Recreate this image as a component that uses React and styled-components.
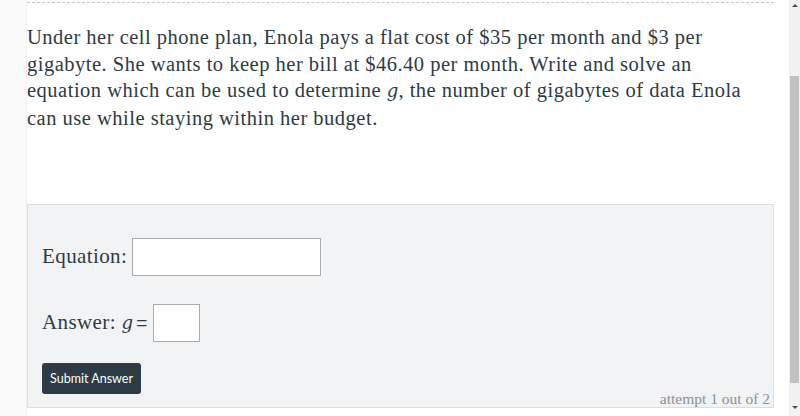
import React from "react";
import styled, { createGlobalStyle } from "styled-components";

const Global = createGlobalStyle`
  html, body { margin: 0; padding: 0; background: #fff; }
  body { width: 800px; height: 416px; overflow: hidden; }
  * { box-sizing: border-box; }
`;

const Page = styled.div`
  display: flex;
  width: 800px;
  height: 416px;
  background: #fff;
`;

const Gutter = styled.div`
  width: 27px;
  flex: none;
  background: #fafafa;
  border-right: 1px solid #f0f0f0;
`;

const Main = styled.div`
  width: 747px;
  flex: none;
  display: flex;
  flex-direction: column;
`;

const Divider = styled.div`
  margin-top: 2px;
  border-top: 1px dashed #c8c8c8;
`;

const Question = styled.p`
  margin: 21px 0 0 0;
  font-family: "Liberation Serif", "DejaVu Serif", serif;
  font-size: 20.5px;
  letter-spacing: 0.5px;
  line-height: 26.7px;
  color: #2d3b45;
  white-space: nowrap;
`;

const Var = styled.i`
  font-family: "DejaVu Serif", serif;
  font-size: 18px;
  letter-spacing: 0;
`;

const Panel = styled.div`
  margin-top: 72px;
  height: 204px;
  background: #f2f3f5;
  border: 1px solid #dcdddf;
  padding: 33px 3px 0 14px;
  display: flex;
  flex-direction: column;
`;

const Row = styled.div`
  display: flex;
  align-items: center;
  gap: 5px;
  margin-bottom: ${(p) => p.$gap}px;
`;

const Label = styled.span`
  font-family: "Liberation Serif", "DejaVu Serif", serif;
  font-size: 21px;
  letter-spacing: 0.4px;
  color: #2d3b45;
`;

const Eq = styled.span`
  font-family: "Liberation Sans", sans-serif;
  font-size: 19px;
  margin-left: 3px;
`;

const Input = styled.div`
  width: ${(p) => p.$w}px;
  height: 38px;
  background: #fff;
  border: 1px solid #a9abad;
`;

const Footer = styled.div`
  display: flex;
  justify-content: space-between;
  align-items: flex-end;
`;

const Button = styled.button`
  width: 99px;
  height: 31px;
  border: none;
  border-radius: 3px;
  background: #2d3b45;
  color: #fff;
  font-family: Lato, "Open Sans", sans-serif;
  font-size: 12.5px;
  padding: 0;
`;

const Attempt = styled.span`
  font-family: "Liberation Serif", "DejaVu Serif", serif;
  font-size: 15.5px;
  color: #8b9096;
  margin-bottom: -14px;
`;

const Spacer = styled.div`
  width: 15px;
  flex: none;
`;

const Scrollbar = styled.div`
  width: 11px;
  flex: none;
  background: #f1f1f1;
  display: flex;
  flex-direction: column;
  align-items: center;
`;

const Arrow = styled.div`
  width: 0;
  height: 0;
  border-left: 3px solid transparent;
  border-right: 3px solid transparent;
  ${(p) => (p.$up ? "border-bottom: 3px solid #505050;" : "border-top: 3px solid #505050;")}
  margin: ${(p) => (p.$up ? "4px 0 0 0" : "auto 0 7px 0")};
`;

const Thumb = styled.div`
  width: 9px;
  margin-top: 69px;
  height: 307px;
  background: #c1c1c1;
`;

export default function App() {
  return (
    <Page>
      <Global />
      <Gutter />
      <Main>
        <Divider />
        <Question>
          Under her cell phone plan, Enola pays a flat cost of $35 per month and $3 per
          <br />
          gigabyte. She wants to keep her bill at $46.40 per month. Write and solve an
          <br />
          equation which can be used to determine <Var>g</Var>, the number of gigabytes of data Enola
          <br />
          can use while staying within her budget.
        </Question>
        <Panel>
          <Row $gap={28}>
            <Label>Equation:</Label>
            <Input $w={189} />
          </Row>
          <Row $gap={21}>
            <Label>
              Answer: <Var>g</Var>
              <Eq>=</Eq>
            </Label>
            <Input $w={47} />
          </Row>
          <Footer>
            <Button>Submit Answer</Button>
            <Attempt>attempt 1 out of 2</Attempt>
          </Footer>
        </Panel>
      </Main>
      <Spacer />
      <Scrollbar>
        <Arrow $up />
        <Thumb />
        <Arrow />
      </Scrollbar>
    </Page>
  );
}
